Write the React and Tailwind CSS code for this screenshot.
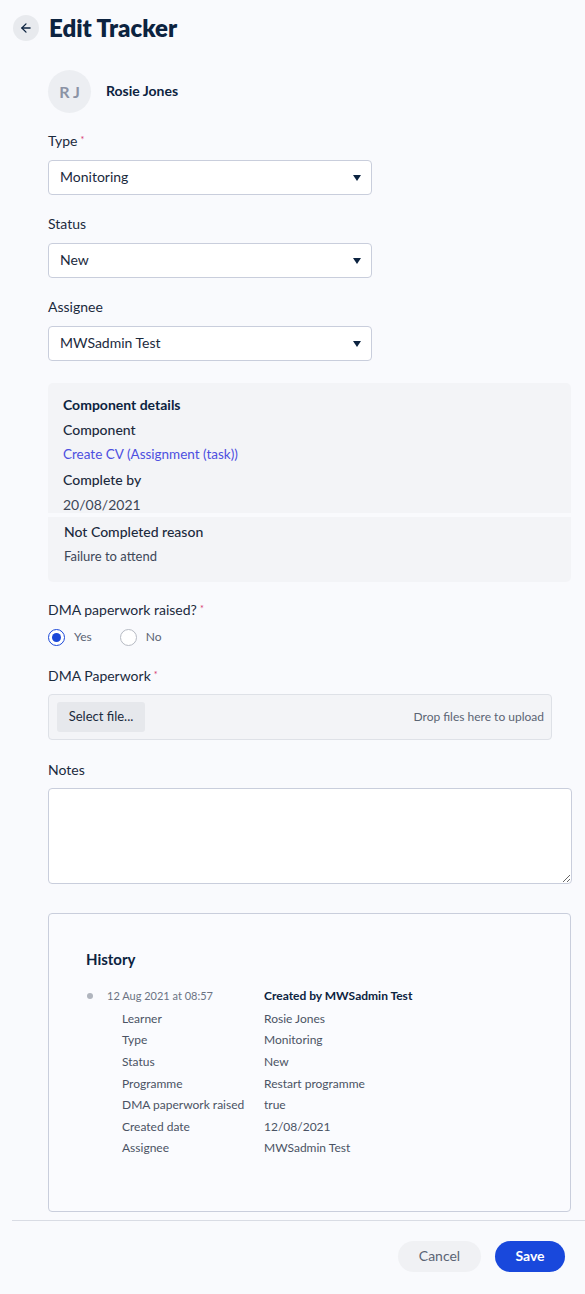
import React from "react";
import { ArrowLeft } from "lucide-react";

function Req() {
  return <span className="relative top-[-3px] ml-[3px] text-[9px] leading-none text-[#d6336c]">*</span>;
}

function Label({ children, req }) {
  return (
    <div className="h-[20px] text-[14px] leading-[20px] text-[#1b2a3d]">
      {children}
      {req && <Req />}
    </div>
  );
}

function Select({ value }) {
  return (
    <div className="mt-[9px] flex h-[35px] w-[324px] items-center justify-between rounded-[4px] border border-[#c9cedc] bg-white pb-[3px] pl-[11px] pr-[10px] text-[14px] text-[#1b2a3d]">
      <span>{value}</span>
      <svg width="8" height="6" viewBox="0 0 8 6" className="mt-[3px]"><path d="M0 0h8L4 6z" fill="#0c2340" /></svg>
    </div>
  );
}

const rows = [
  ["Learner", "Rosie Jones"],
  ["Type", "Monitoring"],
  ["Status", "New"],
  ["Programme", "Restart programme"],
  ["DMA paperwork raised", "true"],
  ["Created date", "12/08/2021"],
  ["Assignee", "MWSadmin Test"],
];

export default function App() {
  return (
    <div className="relative h-[1294px] w-[585px] overflow-hidden bg-[#f9fafd] font-['Lato',sans-serif]">
      {/* header */}
      <div className="flex items-center gap-[10px] pl-[13px] pt-[15px]">
        <div className="flex h-[26px] w-[26px] items-center justify-center rounded-full bg-[#e8eaee]">
          <ArrowLeft size={14} strokeWidth={2.2} color="#0c2340" />
        </div>
        <div className="text-[24px] font-extrabold leading-[26px] text-[#0c2340]">Edit Tracker</div>
      </div>

      <div className="pl-[48px]">
        {/* avatar */}
        <div className="mt-[29px] flex items-center gap-[15px]">
          <div className="flex h-[43px] w-[43px] items-center justify-center rounded-full bg-[#eceef2] text-[16px] font-bold text-[#8b93a5]">
            R J
          </div>
          <div className="pb-[3px] text-[14px] font-bold text-[#0c2340]">Rosie Jones</div>
        </div>

        <div className="mt-[18px]">
          <Label req>Type</Label>
          <Select value="Monitoring" />
        </div>
        <div className="mt-[19px]">
          <Label>Status</Label>
          <Select value="New" />
        </div>
        <div className="mt-[19px]">
          <Label>Assignee</Label>
          <Select value="MWSadmin Test" />
        </div>

        {/* component details */}
        <div className="mt-[22px] w-[523px]">
          <div className="h-[130px] overflow-hidden rounded-t-[5px] bg-[#f3f4f7] px-[15px] pt-[9px] text-[14px] leading-[25px]">
            <div className="font-bold text-[#0c2340]">Component details</div>
            <div className="font-medium text-[#1b2a3d]">Component</div>
            <div className="text-[13.5px] text-[#4d4fe0]">Create CV (Assignment (task))</div>
            <div className="font-medium text-[#1b2a3d]">Complete by</div>
            <div className="text-[#3d4757]">20/08/2021</div>
          </div>
          <div className="mt-[4px] h-[65px] rounded-b-[5px] bg-[#f3f4f7] px-[16px] pt-[2px] text-[14px] leading-[25px]">
            <div className="font-medium text-[#1b2a3d]">Not Completed reason</div>
            <div className="text-[13px] text-[#3d4757]">Failure to attend</div>
          </div>
        </div>

        {/* DMA radio */}
        <div className="mt-[18px]">
          <Label req>DMA paperwork raised?</Label>
          <div className="mt-[8px] flex items-center text-[12px] text-[#5b6474]">
            <div className="flex h-[17px] w-[17px] items-center justify-center rounded-full border-[1.5px] border-[#1a47d8] bg-white">
              <div className="h-[9px] w-[9px] rounded-full bg-[#1a47d8]" />
            </div>
            <span className="ml-[9px]">Yes</span>
            <div className="ml-[28px] h-[17px] w-[17px] rounded-full border-[1.5px] border-[#b6bac3] bg-white" />
            <span className="ml-[9px]">No</span>
          </div>
        </div>

        {/* upload */}
        <div className="mt-[20px]">
          <Label req>DMA Paperwork</Label>
          <div className="mt-[8px] flex h-[46px] w-[504px] items-center justify-between rounded-[4px] border border-[#dee1e7] bg-[#f3f4f7] pl-[8px] pr-[7px]">
            <div className="flex h-[30px] w-[88px] items-center justify-center rounded-[3px] bg-[#e6e8ec] text-[13px] text-[#1b2a3d]">
              Select file...
            </div>
            <div className="text-[12px] text-[#5b6474]">Drop files here to upload</div>
          </div>
        </div>

        {/* notes */}
        <div className="mt-[20px]">
          <Label>Notes</Label>
          <textarea className="mt-[8px] block h-[96px] w-[524px] rounded-[4px] border border-[#c9cedc] bg-white" />
        </div>

        {/* history */}
        <div className="mt-[29px] h-[299px] w-[523px] rounded-[4px] border border-[#c9cedc] bg-[#fafbfe] pl-[37px] pt-[35px]">
          <div className="text-[15px] font-bold leading-[20px] text-[#0c2340]">History</div>
          <div className="mt-[17px] flex items-center text-[12px] leading-[20px]">
            <div className="ml-[1px] h-[6px] w-[6px] rounded-full bg-[#b0b5be]" />
            <div className="ml-[14px] w-[157px] text-[11px] text-[#6b7383]">12 Aug 2021 at 08:57</div>
            <div className="font-bold text-[#0c2340]">Created by MWSadmin Test</div>
          </div>
          <div className="mt-[2px] pl-[36px]">
            {rows.map(([k, v]) => (
              <div key={k} className="flex h-[21.6px] items-center text-[12px] text-[#4a5364]">
                <div className="w-[142px]">{k}</div>
                <div>{v}</div>
              </div>
            ))}
          </div>
        </div>
      </div>

      {/* footer */}
      <div className="ml-[12px] mt-[8px] border-t border-[#d9dce4]" />
      <div className="flex justify-end gap-[14px] pr-[20px] pt-[20px]">
        <button className="h-[31px] w-[83px] rounded-full bg-[#f0f1f4] pb-[2px] text-[14px] text-[#5b6474]">Cancel</button>
        <button className="h-[31px] w-[70px] rounded-full bg-[#1948dc] pb-[2px] text-[14px] font-bold text-white">Save</button>
      </div>
    </div>
  );
}
